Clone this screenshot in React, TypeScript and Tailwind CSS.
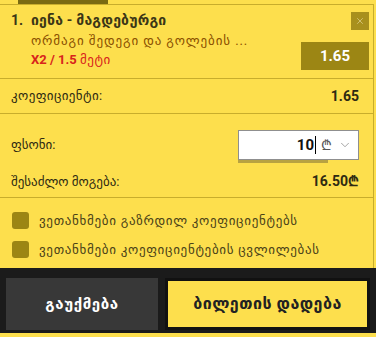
import { X, ChevronDown } from 'lucide-react';

const font = { fontFamily: 'Roboto, "DejaVu Sans", sans-serif' };

const options = ['ვეთანხმები გაზრდილ კოეფიციენტებს', 'ვეთანხმები კოეფიციენტების ცვლილებას'];

export default function App() {
  return (
    <div className="flex h-[337px] w-[376px] flex-col overflow-hidden bg-[#fddf4d]" style={font}>
      {/* top tab */}
      <div className="h-[4px] shrink-0">
        <div className="ml-[18px] h-[4px] w-[90px] bg-[#7a6a12]" />
      </div>

      <div className="flex w-[374px] flex-1 flex-col border-r border-t border-[#c8ad2c]">
        {/* Event */}
        <div className="flex h-[74px] border-b border-[#c8ad2c] pl-[11px] pr-[4px]">
          <div className="flex-1 pt-[6px]">
            <div className="flex text-[14px] font-bold leading-[18px] text-[#3b3616]">
              <span className="w-[20px]">1.</span>
              <span className="tracking-[0.2px]">იენა - მაგდებურგი</span>
            </div>
            <div className="mt-[3px] pl-[20px] text-[13px] leading-[17px] tracking-[0.9px] text-[#8a4f00]">
              ორმაგი შედეგი და გოლების ...
            </div>
            <div className="mt-[2px] pl-[20px] text-[13px] leading-[17px] text-[#d8231c]">
              <span className="font-bold">X2 / 1.5</span> <span className="tracking-[0.6px]">მეტი</span>
            </div>
          </div>
          <div className="flex flex-col items-end pt-[7px]">
            <div className="flex h-[18px] w-[18px] items-center justify-center bg-[#a8901d] text-[#e8dca0]">
              <X size={10} strokeWidth={1.5} />
            </div>
            <div className="mt-[12px] flex h-[28px] w-[68px] items-center justify-center bg-[#9c8614] text-[15px] font-bold text-white">
              1.65
            </div>
          </div>
        </div>

        {/* Odds */}
        <div className="flex h-[35px] items-center justify-between border-b border-[#c8ad2c] pl-[11px] pr-[14px]">
          <span className="text-[13px] tracking-[0.4px] text-[#2e2a12]">კოეფიციენტი:</span>
          <span className="text-[14px] font-bold text-[#2e2a12]">1.65</span>
        </div>

        {/* Stake */}
        <div className="flex h-[84px] flex-col border-b border-[#c8ad2c] pl-[11px] pr-[14px] pt-[16px]">
          <div className="flex items-center justify-between">
            <span className="text-[13px] text-[#2e2a12]">ფსონი:</span>
            <div className="relative">
              <div className="absolute -bottom-[3px] left-0 h-[3px] w-[90px] bg-[#8a7a3a] opacity-60" />
              <div className="relative flex h-[30px] w-[121px] items-center border border-[#8f8f8f] bg-white pr-[6px]">
                <span className="flex-1 text-right text-[15px] font-bold text-[#111]">10</span>
                <span className="ml-[1px] h-[18px] w-[1px] bg-black" />
                <span className="ml-[5px] text-[14px] text-[#555]">₾</span>
                <ChevronDown size={14} strokeWidth={1.3} className="ml-[6px] text-[#888]" />
              </div>
            </div>
          </div>
          <div className="mt-[11px] flex items-center justify-between">
            <span className="text-[13px] text-[#2e2a12]">შესაძლო მოგება:</span>
            <span className="text-[14px] font-bold text-[#2e2a12]">16.50₾</span>
          </div>
        </div>

        {/* Options */}
        <div className="flex flex-1 flex-col gap-[9px] pl-[12px] pt-[13px]">
          {options.map((o) => (
            <div key={o} className="flex items-center gap-[10px]">
              <div className="h-[17px] w-[17px] rounded-[3px] bg-[#9c8614]" />
              <span className="text-[13px] tracking-[0.7px] text-[#4a4218]">{o}</span>
            </div>
          ))}
        </div>
      </div>

      {/* Actions */}
      <div className="flex h-[65px] shrink-0 gap-[7px] bg-[#1b1b1b] px-[6px] pb-[3px] pt-[10px]">
        <button className="flex w-[152px] items-center justify-center bg-[#383838] text-[15px] font-bold tracking-[0.6px] text-white">
          გაუქმება
        </button>
        <button className="flex flex-1 items-center justify-center border-[3px] border-[#111] bg-[#fddf4d] text-[16px] font-bold tracking-[0.5px] text-[#222]">
          ბილეთის დადება
        </button>
      </div>
      <div className="h-[4px] shrink-0 bg-[#fddf4d]" />
    </div>
  );
}
